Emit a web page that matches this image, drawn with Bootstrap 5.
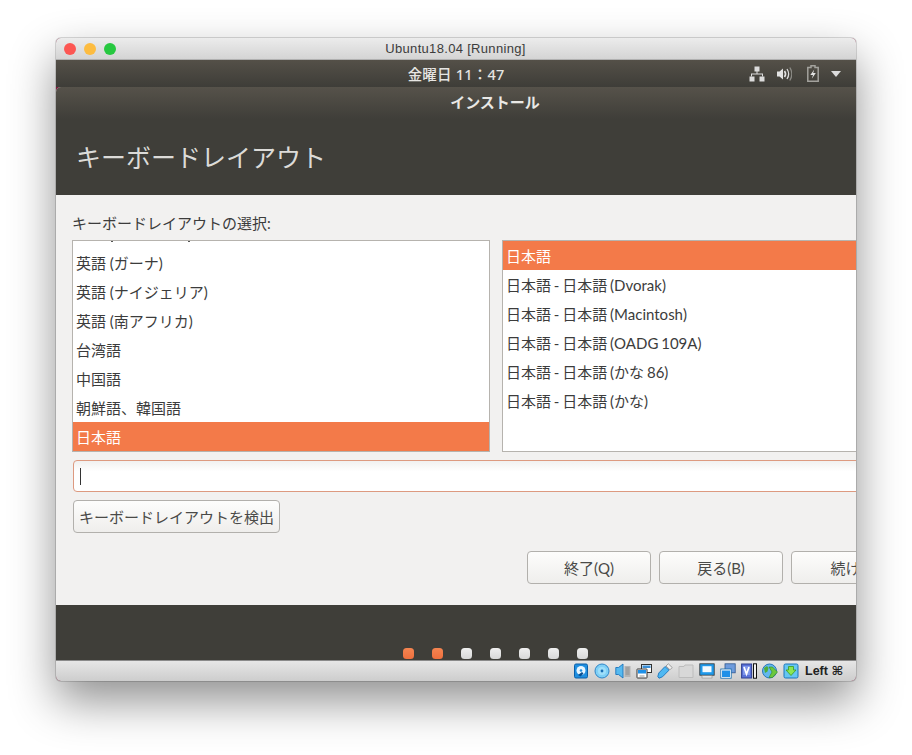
<!DOCTYPE html>
<html lang="ja">
<head>
  <meta charset="UTF-8" />
  <meta name="viewport" content="width=device-width, initial-scale=1.0" />
  <title>Ubuntu18.04 [Running]</title>
  <link href="https://cdn.jsdelivr.net/npm/bootstrap@5.3.3/dist/css/bootstrap.min.css" rel="stylesheet">
  <style>
    body { background: #fff; font-family: "Lato", "Noto Sans CJK JP", sans-serif; padding: 38px 0 0 56px; }
    .vm-window { width: 800px; height: 643px; border-radius: 5px; overflow: hidden; background: #7d1a3c; box-shadow: 0 0 0 1px rgba(0,0,0,.14), 0 20px 46px rgba(0,0,0,.44); }
    .vm-title { height: 22px; background: linear-gradient(#ececec, #d4d4d4); border-bottom: 1px solid #b0b0b0; position: relative; font: 13px/21px "Liberation Sans", "Noto Sans CJK JP", sans-serif; color: #3c3c3c; letter-spacing: .32px; padding-right: 1px; }
    .traffic { position: absolute; left: 8px; top: 5px; }
    .dot-light { width: 12px; height: 12px; border-radius: 50%; display: block; }
    .dot-red { background: #fc5753; }
    .dot-amber { background: #fdbc40; }
    .dot-green { background: #27c840; }
    .top-strip { height: 27px; background: linear-gradient(#545048, #3e3d38); color: #e6e5e2; position: relative; font-family: "Noto Sans", "Noto Sans CJK JP", sans-serif; font-size: 14.5px; font-weight: 500; line-height: 29px; letter-spacing: .2px; }
    .tray { position: absolute; left: 693px; top: 5px; }
    .tray-snd { margin-left: 12px; }
    .tray-bat { margin-left: 15px; }
    .tray-arrow { margin-left: 12px; }
    .install-win { flex: 1; min-height: 0; background: #f2f1f0; border-radius: 5px 0 0 0; overflow: hidden; width: 878px; }
    .install-head { height: 108px; background: linear-gradient(#56524a 0, #3f3e39 32px); color: #e9e8e5; }
    .install-cap { font-size: 15px; font-weight: 700; line-height: 31px; }
    .install-big { font-size: 25px; padding-left: 20px; margin-top: 22px; line-height: 34px; color: #dcdbd8; }
    .install-body { height: 410px; padding: 18px 0 0 16px; color: #3c3c3c; font-size: 15px; width: 900px; }
    .pick-label { line-height: 20px; margin-bottom: 7px; }
    .pick-box { height: 212px; background: #fff; border: 1px solid #b6b3ae; overflow: hidden; flex-shrink: 0; }
    .pick-left { width: 418px; }
    .pick-right { width: 500px; margin-left: 12px; word-spacing: -1px; }
    .pick-item { height: 29px; line-height: 31px; padding-left: 3px; white-space: nowrap; }
    .pick-item.on { background: #f37a49; color: #fff; }
    .clip-row { height: 7px; }
    .clip-tick { width: 2px; height: 1px; background: #555; display: block; }
    .tick-a { margin-left: 38px; }
    .tick-b { margin-left: 75px; }
    .field-fake { width: 900px; height: 32px; margin: 8px 0 0 1px; border: 1px solid #dd9a80; border-radius: 4px; background: linear-gradient(#f1f1f0, #fff 35%); padding: 7px 6px; }
    .caret-bar { width: 1px; height: 17px; background: #333; display: block; }
    .gtk-btn { height: 33px; border: 1px solid #b2b0ac; border-radius: 4px; background: linear-gradient(#fdfdfc, #efeeec); color: #4a4a48; font-size: 15px; line-height: 33px; text-align: center; padding: 0; white-space: nowrap; }
    .detect-btn { width: 207px; margin: 8px 0 0 1px; display: block; }
    .btn-row { margin-top: 18px; margin-left: 455px; }
    .wide-btn { width: 124px; flex-shrink: 0; }
    .install-foot { height: 55px; background: #3f3e39; padding-left: 347px; padding-top: 43px; column-gap: 18px; }
    .step-dot { width: 11px; height: 11px; border-radius: 3.5px; background: linear-gradient(#efefef, #d8d8d8); display: block; }
    .step-dot.done { background: linear-gradient(#f58551, #ef6f3d); }
    .status-bar { height: 21px; background: linear-gradient(#e6e6e6, #cdcdcd); border-top: 1px solid #8a8a8a; padding-right: 13px; font: 700 12.5px/20px "Liberation Sans", "DejaVu Sans", sans-serif; color: #222; column-gap: 5px; }
    .sb-icon { width: 16px; height: 16px; display: block; }
    .sb-wide { width: 17px; height: 16px; display: block; margin-right: -1px; }
    .sb-key { margin-left: 1px; }
  </style>
</head>
<body class="min-vh-100">
  <div class="vm-window d-flex flex-column">
    <div class="vm-title text-center">
      <div class="traffic d-flex gap-2">
        <span class="dot-light dot-red"></span>
        <span class="dot-light dot-amber"></span>
        <span class="dot-light dot-green"></span>
      </div>
      Ubuntu18.04 [Running]
    </div>

    <div class="top-strip text-center">
      金曜日 11：47
      <div class="tray d-flex align-items-center">
        <svg width="16" height="16" viewBox="0 0 16 16" fill="#dcdcdc"><rect x="5.500" y="0.500" width="5" height="5"/><rect x="0.500" y="10.500" width="5" height="5"/><rect x="10.500" y="10.500" width="5" height="5"/><path d="M7.500 5h1v2.500h5.500v3h-1V8.500H3v2H2v-3h5.500z"/></svg>
        <svg class="tray-snd" width="15" height="16" viewBox="0 0 15 16"><path d="M0 5.500h2.500L6 2.500v11l-3.500-3H0z" fill="#e2e2e2"/><path d="M7.500 5c1.300 1.800 1.300 4.200 0 6" fill="none" stroke="#e2e2e2" stroke-width="1.600"/><path d="M10 3c2 3 2 7 0 10" fill="none" stroke="#dcdcdc" stroke-width="1.300"/><path d="M12.800 1.500c2.500 4 2.500 9 0 13" fill="none" stroke="#8b8a85" stroke-width="1.300"/></svg>
        <svg class="tray-bat" width="12" height="17" viewBox="0 0 12 17"><path d="M4 .8h4v1.700h3.200v13.700H.8V2.500H4z" fill="none" stroke="#a3a29d" stroke-width="1.500"/><path d="M7.300 4.500 3.300 10H6l-1.200 3.800L8.800 8H6.200z" fill="#e4e4e4"/></svg>
        <svg class="tray-arrow" width="10" height="6" viewBox="0 0 10 6"><path d="M0 0h10L5 6z" fill="#dcdcdc"/></svg>
      </div>
    </div>

    <div class="install-win">
      <div class="install-head">
        <div class="install-cap text-center">インストール</div>
        <div class="install-big">キーボードレイアウト</div>
      </div>
      <div class="install-body">
        <div class="pick-label">キーボードレイアウトの選択:</div>
        <div class="d-flex">
          <div class="pick-box pick-left">
            <div class="clip-row d-flex"><span class="clip-tick tick-a"></span><span class="clip-tick tick-b"></span></div>
            <div class="pick-item">英語 (ガーナ)</div>
            <div class="pick-item">英語 (ナイジェリア)</div>
            <div class="pick-item">英語 (南アフリカ)</div>
            <div class="pick-item">台湾語</div>
            <div class="pick-item">中国語</div>
            <div class="pick-item">朝鮮語、韓国語</div>
            <div class="pick-item on">日本語</div>
          </div>
          <div class="pick-box pick-right">
            <div class="pick-item on">日本語</div>
            <div class="pick-item">日本語 - 日本語 (Dvorak)</div>
            <div class="pick-item">日本語 - 日本語 (Macintosh)</div>
            <div class="pick-item">日本語 - 日本語 (OADG 109A)</div>
            <div class="pick-item">日本語 - 日本語 (かな 86)</div>
            <div class="pick-item">日本語 - 日本語 (かな)</div>
          </div>
        </div>
        <div class="field-fake"><span class="caret-bar"></span></div>
        <button type="button" class="btn gtk-btn detect-btn">キーボードレイアウトを検出</button>
        <div class="btn-row d-flex gap-2">
          <button type="button" class="btn gtk-btn wide-btn">終了(Q)</button>
          <button type="button" class="btn gtk-btn wide-btn">戻る(B)</button>
          <button type="button" class="btn gtk-btn wide-btn">続ける</button>
        </div>
      </div>
      <div class="install-foot d-flex">
        <span class="step-dot done"></span><span class="step-dot done"></span><span class="step-dot"></span><span class="step-dot"></span><span class="step-dot"></span><span class="step-dot"></span><span class="step-dot"></span>
      </div>
    </div>

    <div class="status-bar d-flex align-items-center justify-content-end">
      <!-- hard disk -->
      <svg class="sb-icon" viewBox="0 0 16 16"><rect x="1.500" y="1" width="13" height="14" rx="1.500" fill="#1f8fe0" stroke="#0b5fa8"/><circle cx="8" cy="7.500" r="4.500" fill="#e8f6ff"/><circle cx="8" cy="7.500" r="1.300" fill="#1f8fe0"/><path d="m5 12 4-3 1.500 1.500-3 3z" fill="#0b4f90"/></svg>
      <!-- optical disc -->
      <svg class="sb-icon" viewBox="0 0 16 16"><circle cx="8" cy="8" r="7" fill="#7fd0f6" stroke="#2f86c8"/><circle cx="8" cy="8" r="4" fill="#9fdffa"/><circle cx="8" cy="8" r="1.400" fill="#1a6fb5"/></svg>
      <!-- audio -->
      <svg class="sb-icon" viewBox="0 0 16 16"><path d="M9.500 3h6v11h-6z" fill="#b5b5b5"/><path d="M10.500 5h4M10.500 7h4M10.500 9h4M10.500 11h4" stroke="#8d8d8d"/><path d="M.8 4.500h2.700L8 1v14l-4.500-3.500H.8z" fill="#56baf0" stroke="#1c74bb" stroke-width=".9"/></svg>
      <!-- network -->
      <svg class="sb-icon" viewBox="0 0 16 16"><rect x="5.500" y="1.500" width="10" height="8" fill="#fff" stroke="#333"/><rect x="6.500" y="2.500" width="8" height="2.500" fill="#3a8fd8"/><rect x="1" y="6" width="10" height="9" rx=".5" fill="#fff" stroke="#333"/><rect x="2" y="7" width="8" height="3.500" fill="#1e90e8"/><rect x="3.500" y="12.500" width="5" height="1" fill="#999"/></svg>
      <!-- usb -->
      <svg class="sb-icon" viewBox="0 0 16 16"><path d="M.8 13.500 1.800 10 8 3.500 12 7.200 5.500 13.800 2 15.200z" fill="#4fb8f2" stroke="#1c74bb" stroke-width=".9"/><path d="M9 3 11.300.8 15.200 4.500 13 6.800z" fill="#f1f1f1" stroke="#8a8a8a" stroke-width=".8"/></svg>
      <!-- shared folder -->
      <svg class="sb-icon" viewBox="0 0 16 16"><path d="M1 3.500h5l1-1.500h8v12.500H1z" fill="#d8d8d8" stroke="#bcbcbc"/></svg>
      <!-- display -->
      <svg class="sb-icon" viewBox="0 0 16 16"><rect x=".8" y=".8" width="14.400" height="11.400" fill="#1f99ea" stroke="#333" stroke-width=".8"/><rect x="3.500" y="3.200" width="9" height="6" fill="#f4fbff"/><rect x="3" y="12.800" width="10" height="2.200" fill="#ededed" stroke="#8a8a8a" stroke-width=".6"/></svg>
      <!-- video capture -->
      <svg class="sb-icon" viewBox="0 0 16 16"><rect x="5" y=".8" width="10.200" height="9" fill="#6e9bdc" stroke="#30588f" stroke-width=".8"/><rect x=".8" y="6" width="10.400" height="9.200" fill="#fff" stroke="#1168aa" stroke-width=".8"/><rect x="2" y="7.500" width="8" height="6.500" fill="#1f90e8"/></svg>
      <!-- guest additions, mouse bar -->
      <svg class="sb-wide" viewBox="0 0 17 16"><rect x=".6" y="1" width="10" height="14" fill="#5a72d8" stroke="#2f3f90"/><rect x="2" y="3" width="7" height="9" fill="#7f96ea"/><path d="m3 4 2.500 7L8 4" fill="none" stroke="#fff" stroke-width="1.700"/><rect x="12.500" y=".8" width="3" height="14.400" fill="#f2f2f2" stroke="#111"/></svg>
      <!-- shared network -->
      <svg class="sb-icon" viewBox="0 0 16 16"><circle cx="7.500" cy="8" r="7" fill="#63b8ee" stroke="#2a76b8"/><path d="M2 5 5 3l1.500 2-1 3.500L3 10z" fill="#4fae3a"/><path d="M7 4h3.500l5 5-5 5.500H7l3-5.500z" fill="#6cc83e" stroke="#2f8a22" stroke-width=".6"/></svg>
      <!-- download arrow -->
      <svg class="sb-icon" viewBox="0 0 16 16"><rect x="1" y="1" width="14" height="14" rx="1.500" fill="#66c6f2" stroke="#1c74bb"/><path d="M5.500 3.500h5V7H13l-5 5.500L3 7h2.500z" fill="#8be652" stroke="#3a9a20" stroke-width=".8"/></svg>
      <span class="sb-key">Left ⌘</span>
    </div>
  </div>
  <script src="https://cdn.jsdelivr.net/npm/bootstrap@5.3.3/dist/js/bootstrap.bundle.min.js"></script>
</body>
</html>
